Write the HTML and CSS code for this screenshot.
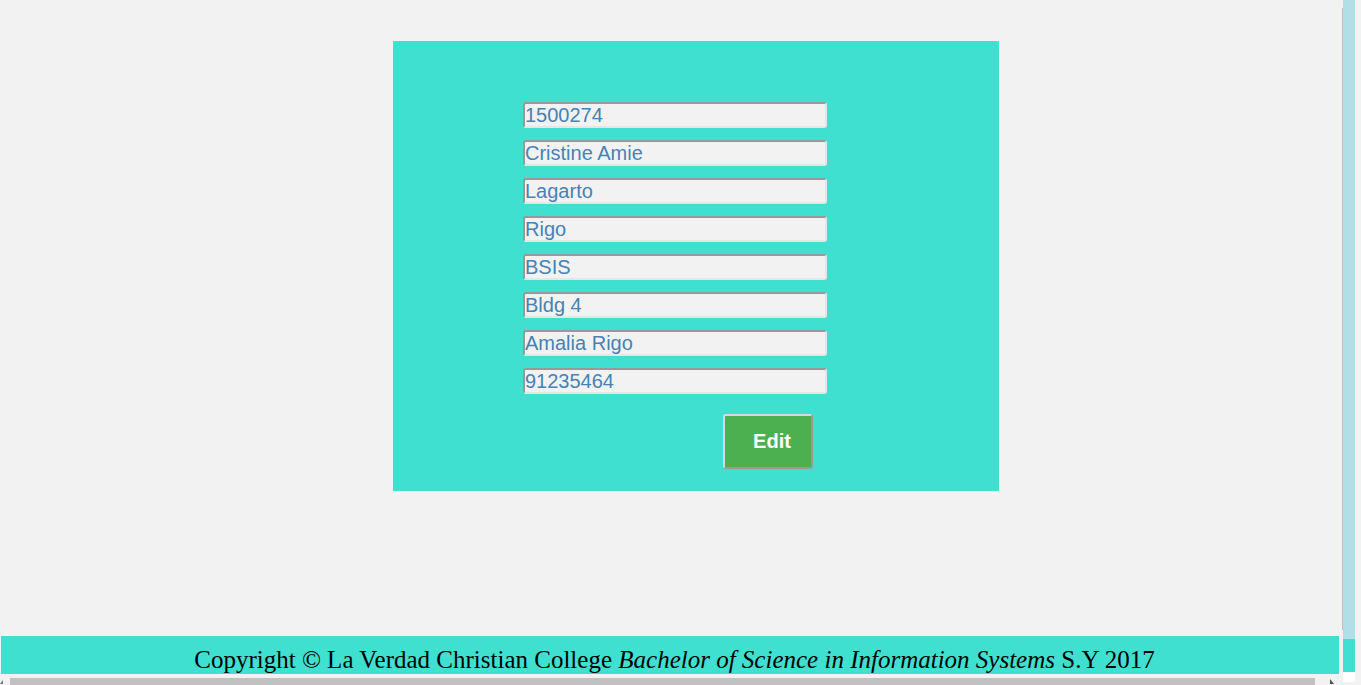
FILE: index.html
```html
<!DOCTYPE html>
<html>
<head>
<meta charset="utf-8">
<title>Student</title>
<link rel="stylesheet" href="styles.css">
</head>
<body>
<div class="screen">
  <div class="viewport">
    <div class="content">
      <form class="card">
        <input class="field" type="text" value="1500274">
        <input class="field" type="text" value="Cristine Amie">
        <input class="field" type="text" value="Lagarto">
        <input class="field" type="text" value="Rigo">
        <input class="field" type="text" value="BSIS">
        <input class="field" type="text" value="Bldg 4">
        <input class="field" type="text" value="Amalia Rigo">
        <input class="field" type="text" value="91235464">
        <div class="actions"><button class="btn" type="button">Edit</button></div>
      </form>
    </div>
    <footer class="footer">Copyright © La Verdad Christian College <i>Bachelor of Science in Information Systems</i> S.Y 2017</footer>
    <div class="hscroll">
      <span class="arrow arrow-left"></span>
      <span class="thumb"></span>
      <span class="arrow arrow-right"></span>
    </div>
  </div>
  <div class="side">
    <span class="vline"></span>
    <div class="strip">
      <span class="strip-top"></span>
      <span class="strip-mid"></span>
      <span class="strip-end"></span>
    </div>
  </div>
</div>
</body>
</html>
```

FILE: styles.css
```css
html, body {
  margin: 0;
  padding: 0;
  background: #f2f2f2;
  overflow: hidden;
}
.screen {
  display: flex;
  height: 685px;
  width: 1361px;
}
.viewport {
  width: 1342px;
  display: flex;
  flex-direction: column;
}
.content {
  flex: 1;
  padding-top: 41px;
  padding-left: 393px;
  box-sizing: border-box;
}
.card {
  width: 606px;
  height: 450px;
  margin: 0;
  background: #40e0d0;
  box-sizing: border-box;
  padding: 61px 0 0 130px;
  display: flex;
  flex-direction: column;
  gap: 12px;
}
.field {
  width: 304px;
  height: 26px;
  box-sizing: border-box;
  margin: 0;
  padding: 0;
  border: 2px solid;
  border-color: #999 #e6e6e6 #e6e6e6 #999;
  border-radius: 3px;
  background: #f2f2f2;
  color: #4682b4;
  font-family: "Liberation Sans", Arial, sans-serif;
  font-size: 20px;
  line-height: 22px;
  outline: none;
}
.actions {
  display: flex;
  padding-left: 200px;
  padding-top: 8px;
}
.btn {
  width: 90px;
  height: 55px;
  box-sizing: border-box;
  border: 2px solid;
  border-color: #d9d9d9 #999 #999 #d9d9d9;
  border-radius: 3px;
  background: #4caf50;
  color: #fff;
  font-family: "Liberation Sans", Arial, sans-serif;
  font-weight: bold;
  font-size: 20px;
  padding: 0 0 0 8px;
}
.footer {
  height: 38px;
  margin-left: 1px;
  width: 1338px;
  box-sizing: border-box;
  background: #40e0d0;
  font-family: "Liberation Serif", "Times New Roman", serif;
  font-size: 25px;
  color: #000;
  text-align: center;
  padding-top: 10px;
  padding-left: 9px;
  line-height: 28px;
  white-space: nowrap;
  overflow: hidden;
}
.hscroll {
  height: 11px;
  display: flex;
  align-items: flex-end;
  position: relative;
}
.thumb {
  display: block;
  width: 1305px;
  height: 7px;
  margin-left: 7px;
  background: #c1c1c1;
}
.arrow {
  display: block;
  width: 0;
  height: 0;
  margin-bottom: 1px;
}
.arrow-left {
  border-top: 4px solid transparent;
  border-right: 3px solid #777;
}
.arrow-right {
  margin-left: 15px;
  border-top: 5px solid transparent;
  border-left: 4px solid #505050;
}
.side {
  width: 19px;
  display: flex;
}
.vline {
  display: block;
  width: 1px;
  height: 622px;
  margin-top: 8px;
  background: #c0c0c0;
}
.strip {
  width: 12px;
  display: flex;
  flex-direction: column;
}
.strip-top {
  display: block;
  height: 639px;
  background: #b0e0e6;
}
.strip-mid {
  display: block;
  height: 33px;
  background: #40e0d0;
}
.strip-end {
  display: block;
  height: 10px;
  background: #fff;
}
```
